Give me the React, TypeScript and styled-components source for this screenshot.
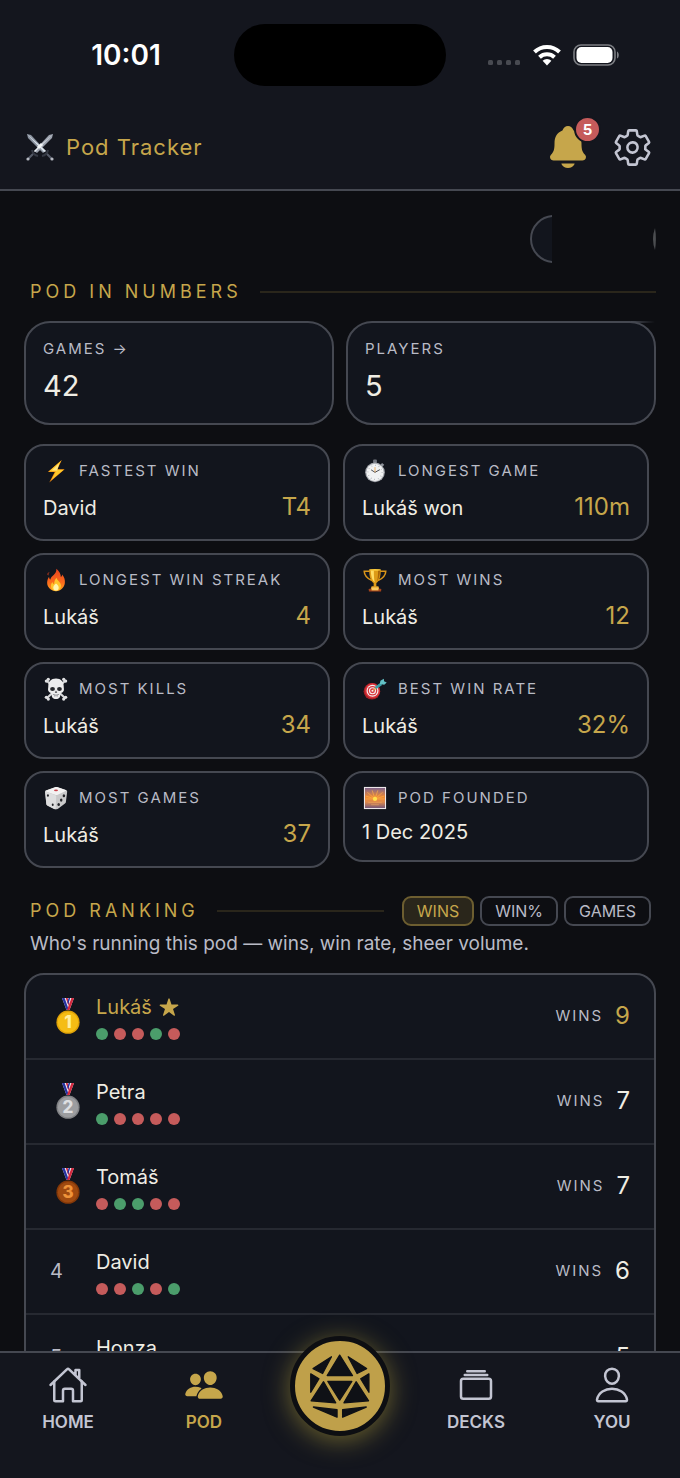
import React, { useState } from 'react';
import styled, { ThemeProvider, createGlobalStyle, css } from 'styled-components';
import {
  IoAlbumsOutline,
  IoHomeOutline,
  IoNotifications,
  IoPeople,
  IoPersonOutline,
  IoSettingsOutline,
  IoStar,
} from 'react-icons/io5';

const theme = {
  colors: {
    page: '#0d0e12',
    surface: '#12151d',
    bar: '#14161e',
    border: '#454851',
    divider: '#262931',
    text: '#efede4',
    muted: '#b9bbc6',
    icon: '#c3c5d2',
    gold: '#c6a64b',
    goldLine: 'rgba(198, 166, 75, 0.16)',
    goldFill: 'rgba(198, 166, 75, 0.16)',
    win: '#4b9d6b',
    loss: '#c55b5b',
  },
  font: "Inter, 'Liberation Sans', sans-serif",
};

type Theme = typeof theme;

declare module 'styled-components' {
  export interface DefaultTheme extends Theme {}
}

const GlobalStyle = createGlobalStyle`
  * {
    box-sizing: border-box;
  }

  body {
    margin: 0;
    background: ${({ theme }) => theme.colors.page};
    color: ${({ theme }) => theme.colors.text};
    font-family: ${({ theme }) => theme.font};
  }

  h1, h2, p, ol, dl, dd {
    margin: 0;
    padding: 0;
  }

  button {
    font-family: inherit;
    cursor: pointer;
  }

  a {
    color: inherit;
    text-decoration: none;
  }
`;

// App shell: bars stay put, the middle scrolls
const Screen = styled.div`
  display: flex;
  flex-direction: column;
  height: 100vh;
`;

const TopBar = styled.header`
  flex: none;
  background: ${({ theme }) => theme.colors.bar};
  border-bottom: 2px solid ${({ theme }) => theme.colors.border};
`;

const StatusBar = styled.div`
  display: grid;
  grid-template-columns: 1fr 212px 1fr;
  align-items: center;
  height: 110px;
`;

const Clock = styled.time`
  justify-self: center;
  padding-left: 18px;
  font-size: 28px;
  font-weight: 600;
  line-height: 32px;
  color: #fff;
`;

const Island = styled.div`
  height: 62px;
  border-radius: 31px;
  background: #000;
`;

const StatusIcons = styled.div`
  display: flex;
  align-items: center;
  justify-self: center;
  gap: 12px;
  padding-right: 20px;
`;

const TitleRow = styled.div`
  display: flex;
  align-items: center;
  justify-content: space-between;
  padding: 13px 27px 18px 26px;
`;

const Brand = styled.div`
  display: flex;
  align-items: center;
  gap: 12px;
`;

const BrandName = styled.h1`
  font-size: 22px;
  font-weight: 400;
  line-height: 28px;
  letter-spacing: 1px;
  color: ${({ theme }) => theme.colors.gold};
`;

const Actions = styled.div`
  display: flex;
  align-items: center;
  gap: 20px;
`;

const IconButton = styled.button<{ $gold?: boolean }>`
  position: relative;
  display: flex;
  padding: 0;
  border: 0;
  background: none;
  color: ${({ theme, $gold }) => ($gold ? theme.colors.gold : theme.colors.icon)};
`;

const Badge = styled.span`
  position: absolute;
  top: -7px;
  right: -9px;
  width: 27px;
  height: 27px;
  border: 2px solid ${({ theme }) => theme.colors.bar};
  border-radius: 50%;
  background: ${({ theme }) => theme.colors.loss};
  color: #fff;
  font-size: 15px;
  font-weight: 700;
  line-height: 23px;
  text-align: center;
`;

const Content = styled.main`
  flex: 1;
  min-height: 0;
  padding: 24px 24px 0;
  overflow-y: auto;
  scrollbar-width: none;
`;

// Row of chips that are only partly revealed
const ChipRow = styled.div`
  display: flex;
  align-items: center;
  justify-content: flex-end;
  gap: 100px;
  height: 48px;
`;

const ChipMask = styled.div`
  width: 22px;
  overflow: hidden;
`;

const Chip = styled.div`
  width: 48px;
  height: 48px;
  border: 2px solid ${({ theme }) => theme.colors.border};
  border-radius: 50%;
  background: ${({ theme }) => theme.colors.surface};
`;

const SectionHead = styled.div<{ $ranking?: boolean }>`
  display: flex;
  align-items: center;
  gap: 18px;
  margin-top: ${({ $ranking }) => ($ranking ? 28 : 17)}px;
  padding: ${({ $ranking }) => ($ranking ? '0 5px 0 6px' : '0 0 0 6px')};
`;

const SectionTitle = styled.h2`
  font-size: 18px;
  font-weight: 400;
  line-height: 24px;
  letter-spacing: 4px;
  color: ${({ theme }) => theme.colors.gold};
`;

const Rule = styled.span`
  flex: 1;
  height: 2px;
  background: ${({ theme }) => theme.colors.goldLine};
`;

const cardStyles = css`
  border: 2px solid ${({ theme }) => theme.colors.border};
  background: ${({ theme }) => theme.colors.surface};
`;

const Totals = styled.div`
  display: grid;
  grid-template-columns: 1fr 1fr;
  gap: 12px;
  margin-top: 17px;
`;

const TotalCard = styled.a<{ $trail?: boolean }>`
  ${cardStyles}
  position: relative;
  padding: 16px 17px 18px;
  border-radius: 26px;

  /* top edge runs on past the rounded corner and fades out */
  ${({ $trail, theme }) =>
    $trail &&
    css`
      &::after {
        content: '';
        position: absolute;
        top: -2px;
        right: -1px;
        width: 24px;
        height: 2px;
        background: linear-gradient(to right, ${theme.colors.border}, transparent);
      }
    `}
`;

const Label = styled.div`
  font-size: 15px;
  line-height: 20px;
  letter-spacing: 2px;
  text-transform: uppercase;
  color: ${({ theme }) => theme.colors.muted};
`;

const TotalValue = styled.div`
  margin-top: 8px;
  font-size: 29px;
  line-height: 38px;
`;

const StatGrid = styled.dl`
  display: grid;
  grid-template-columns: 1fr 1fr;
  align-items: start;
  gap: 12px 13px;
  margin-top: 19px;
  padding-right: 7px;
`;

const StatCard = styled.div`
  ${cardStyles}
  padding: 13px 17px 14px;
  border-radius: 20px;
`;

const StatLabel = styled.dt`
  display: flex;
  align-items: center;
  gap: 10px;
  height: 24px;
`;

const StatBody = styled.dd<{ $tall: boolean }>`
  display: flex;
  align-items: baseline;
  justify-content: space-between;
  height: ${({ $tall }) => ($tall ? 34 : 28)}px;
  margin-top: 8px;
  font-size: 20px;
  line-height: ${({ $tall }) => ($tall ? 32 : 28)}px;
`;

const StatValue = styled.span`
  font-size: 24px;
  color: ${({ theme }) => theme.colors.gold};
`;

const Filters = styled.div`
  display: flex;
  gap: 6px;
`;

const FilterButton = styled.button<{ $active: boolean }>`
  height: 30px;
  padding: 0 13px;
  border: 2px solid ${({ theme, $active }) => ($active ? '#6d5e30' : theme.colors.border)};
  border-radius: 9px;
  background: ${({ theme, $active }) => ($active ? theme.colors.goldFill : 'transparent')};
  color: ${({ theme, $active }) => ($active ? theme.colors.gold : theme.colors.muted)};
  font-size: 16px;
  line-height: 20px;
`;

const Subtitle = styled.p`
  margin: 6px 0 0 6px;
  font-size: 19px;
  line-height: 24px;
  color: ${({ theme }) => theme.colors.muted};
`;

const RankingList = styled.ol`
  ${cardStyles}
  margin-top: 17px;
  border-radius: 20px;
  list-style: none;
`;

const RankingRow = styled.li`
  display: flex;
  align-items: center;
  height: 85px;
  padding: 0 24px;
  border-bottom: 2px solid ${({ theme }) => theme.colors.divider};

  &:last-child {
    border-bottom: 0;
  }
`;

const Rank = styled.div`
  display: flex;
  width: 46px;
  padding-bottom: 2px;
  font-size: 20px;
  line-height: 24px;
  color: ${({ theme }) => theme.colors.muted};
`;

const Player = styled.div`
  flex: 1;
`;

const PlayerName = styled.div<{ $me: boolean }>`
  display: flex;
  align-items: center;
  gap: 7px;
  font-size: 20px;
  line-height: 28px;
  color: ${({ theme, $me }) => ($me ? theme.colors.gold : theme.colors.text)};
`;

const Form = styled.div`
  display: flex;
  gap: 6px;
  margin-top: 7px;
`;

const FormDot = styled.span<{ $win: boolean }>`
  width: 12px;
  height: 12px;
  border-radius: 50%;
  background: ${({ theme, $win }) => ($win ? theme.colors.win : theme.colors.loss)};
`;

const Score = styled.div<{ $me: boolean }>`
  display: flex;
  align-items: center;
  gap: 12px;
  padding-bottom: 2px;
  font-size: 24px;
  line-height: 28px;
  color: ${({ theme, $me }) => ($me ? theme.colors.gold : theme.colors.text)};
`;

const TabBar = styled.nav`
  position: relative;
  flex: none;
  display: grid;
  grid-template-columns: repeat(5, 1fr);
  height: 127px;
  border-top: 2px solid ${({ theme }) => theme.colors.border};
  background: ${({ theme }) => theme.colors.bar};
`;

const Tab = styled.a<{ $active?: boolean }>`
  display: flex;
  flex-direction: column;
  align-items: center;
  gap: 7px;
  padding-top: 12px;
  font-size: 17px;
  font-weight: 600;
  line-height: 20px;
  color: ${({ theme, $active }) => ($active ? theme.colors.gold : theme.colors.icon)};
`;

// Round button that rides over the top edge of the tab bar
const NewGameButton = styled.button`
  position: absolute;
  top: -17px;
  left: calc(50% - 50px);
  display: flex;
  width: 100px;
  height: 100px;
  padding: 0;
  border: 5px solid ${({ theme }) => theme.colors.page};
  border-radius: 50%;
  background: #bfa04a;
  box-shadow: 0 4px 26px rgba(198, 176, 60, 0.5);
`;

/* ---------- drawings ---------- */

const Svg: React.FC<{ children: React.ReactNode }> = ({ children }) => (
  <svg width="26" height="26" viewBox="-1.5 -1.5 27 27" aria-hidden="true">
    {children}
  </svg>
);

const Sliver = () => (
  <svg width="4" height="24" viewBox="0 0 4 24" aria-hidden="true">
    <path d="M3 1Q-1 12 3 23Q4.800 12 3 1z" fill="#4b4d50" />
  </svg>
);

const Swords = () => (
  <svg width="28" height="28" viewBox="0 0 28 28" aria-hidden="true">
    <path d="M2 26 8 20M26 26 20 20" stroke="#565b68" strokeWidth="2" />
    <path d="M6 17q1 5 6 6M22 17q-1 5-6 6" fill="none" stroke="#343843" strokeWidth="2" />
    <path d="M27 1 26 5 11 20 8 18 23 2z" fill="#9ba1ad" />
    <path d="M27 1 8 18 9 19z" fill="#e9eef2" />
    <path d="M1 1 5 2 20 18 17 20 2 5z" fill="#8d95a2" />
    <path d="M1 1 20 18 18 19z" fill="#dfe7ee" />
    <path d="m12 15 4-4" stroke="#f3f6f8" strokeWidth="3" />
    <circle cx="2" cy="26" r="1.6" fill="#b5b9c1" />
    <circle cx="26" cy="26" r="1.6" fill="#b5b9c1" />
  </svg>
);

const Bolt = () => (
  <Svg>
    <path d="M18 .5 3.500 13h7.200L5 24 21 10.200h-7.500z" fill="#f08a12" />
    <path d="M17.500 1 4.600 12.400h7.200L7.200 21.400 20 10.600h-7.600z" fill="#ffc928" />
    <path d="M15.400 4 7.600 11.400h5.600z" fill="#ffe680" />
  </Svg>
);

const Stopwatch = () => (
  <Svg>
    <rect x="10" y="0" width="4" height="4" rx="1" fill="#70747d" />
    <path d="m18.600 4.400 2.200 2" stroke="#8f939b" strokeWidth="2.200" />
    <circle cx="12" cy="13.400" r="10.200" fill="#a9acb2" />
    <circle cx="12" cy="13.400" r="8.900" fill="#f1f2f3" />
    <circle cx="12" cy="13.400" r="7.300" fill="none" stroke="#9a9da4" strokeWidth="1.200" strokeDasharray="0.600 3.220" />
    <path d="m8 10.800 4 2.600 5-2.800" fill="none" stroke="#44474e" strokeWidth="1" />
    <path d="M12 13.400V8" stroke="#e79a3c" strokeWidth="0.800" />
  </Svg>
);

const Fire = () => (
  <Svg>
    <defs>
      <linearGradient id="flame" x1="0" y1="0" x2="0" y2="1">
        <stop offset="0" stopColor="#e8431f" />
        <stop offset="0.600" stopColor="#fb6a1c" />
        <stop offset="1" stopColor="#ffa21d" />
      </linearGradient>
    </defs>
    <path
      d="M12.400.4c3 2.400 4.800 5.800 4.600 8.600 1-.6 1.400-1.600 1.400-2.600 2.200 2.600 3.200 5.600 2.800 8.800-.6 4.800-4.400 8.400-9.200 8.400s-9-3.600-9.200-8.400c-.1-2.900.9-5 2-6.600.1 1.400.5 2.400 1.400 3C6.600 7.600 12.800 6.600 12.400.4z"
      fill="url(#flame)"
    />
    <path d="M12.600 9.600c.4 3 4.800 4.600 4.600 8.600-.2 3-2.200 5-5.200 5s-5.200-2-5.200-5c0-2 .8-3.200 1.600-4 .2 1.400.8 2 1.600 2.200.2-2.600.6-4.800 2.600-6.800z" fill="#ffc42c" />
    <path d="M12 15.600c1.800 1.600 2.800 2.600 2.800 4.400S13.800 23 12 23s-2.800-1.200-2.800-3 1-2.800 2.800-4.400z" fill="#fff5b0" />
    <path d="M4.600 4.200c-1 1-1.200 2-.6 2.800" fill="none" stroke="#d9401e" strokeWidth="1" />
  </Svg>
);

const Trophy = () => (
  <Svg>
    <path
      d="M6.500 3H.8c.2 5 3 7.500 8 9.500M17.500 3h5.700c-.2 5-3 7.500-8 9.500"
      fill="none"
      stroke="#d9951a"
      strokeWidth="1.600"
    />
    <path d="M6 1h12c0 7.500-1.400 12-4.600 14v4h-2.800v-4C7.400 13 6 8.500 6 1z" fill="#dd9b17" />
    <path d="M7.600 2h3.200c0 6 .2 9.500 1 12.500C9 12.500 7.800 8 7.600 2z" fill="#ffdc63" />
    <path d="M15.200 2h2c-.2 5-1 9-3 11.200.8-3.600 1-7 1-11.200z" fill="#a86508" />
    <ellipse cx="12" cy="1.500" rx="6" ry="1" fill="#f9c93d" />
    <path d="M8.500 18.500h7l1 3h-9z" fill="#e8a52a" />
    <rect x="5.600" y="21" width="12.800" height="3" rx="0.600" fill="#a3431a" />
    <rect x="8.400" y="19.800" width="7.200" height="3" fill="#f6c95f" />
  </Svg>
);

const Skull = () => (
  <Svg>
    <g stroke="#d6d7d9" strokeWidth="2.200" strokeLinecap="round">
      <path d="m3 4 18 17M21 4 3 21" />
    </g>
    <g fill="#dfe0e2">
      <circle cx="2" cy="3.800" r="1.700" />
      <circle cx="4" cy="2" r="1.700" />
      <circle cx="22" cy="3.800" r="1.700" />
      <circle cx="20" cy="2" r="1.700" />
      <circle cx="2" cy="20.600" r="1.700" />
      <circle cx="4" cy="22.400" r="1.700" />
      <circle cx="22" cy="20.600" r="1.700" />
      <circle cx="20" cy="22.400" r="1.700" />
    </g>
    <path
      d="M12 1.200c5.200 0 8 3.400 8 8 0 1.600.4 2.800.2 4.200-.3 1.600-2 2.600-3.400 3-.2 3-.6 6-4.800 6s-4.600-3-4.800-6c-1.400-.4-3.100-1.400-3.400-3-.2-1.400.2-2.600.2-4.200 0-4.600 2.800-8 8-8z"
      fill="#ececed"
    />
    <ellipse cx="8.400" cy="12" rx="2.500" ry="2" fill="#26272b" />
    <ellipse cx="15.600" cy="12" rx="2.500" ry="2" fill="#26272b" />
    <path d="m12 13.600 1.300 2.400h-2.600z" fill="#3a3b40" />
    <path d="M8.800 17.600q3.200 1.600 6.400 0M10.800 18v2M13.200 18v2" fill="none" stroke="#8d8f94" strokeWidth="0.900" />
  </Svg>
);

const Dart = () => (
  <Svg>
    <circle cx="8.800" cy="14.400" r="8.600" fill="#a81f25" />
    <circle cx="9.400" cy="13.800" r="7.800" fill="#d8333a" />
    <circle cx="9.400" cy="13.800" r="6.200" fill="#f5f1f1" />
    <circle cx="9.400" cy="13.800" r="5" fill="#d8333a" />
    <circle cx="9.400" cy="13.800" r="3.700" fill="#f5f1f1" />
    <circle cx="9.400" cy="13.800" r="2.500" fill="#d8333a" />
    <circle cx="9.400" cy="13.800" r="1.100" fill="#f5f1f1" />
    <path d="m10 13.400 4-3" stroke="#d8a54b" strokeWidth="1.300" />
    <path d="m12.600 10.800 6-4.200" stroke="#3aa0a8" strokeWidth="2.800" />
    <path d="m17 6.800.6-3.400 3.600-2 .2 2.600 2.800 1.200-2.600 2.400z" fill="#63c1c6" />
  </Svg>
);

const Dice = () => (
  <Svg>
    <path d="M11 .8c1-.3 1.800-.3 2.800 0l8.400 2.800c1 .3 1.500 1 1.400 2l-1.300 10.400c-.1 1-.5 1.500-1.300 2.100l-6.900 5c-1.300.8-2.800.8-4.200.2l-6.600-3.200c-.9-.5-1.300-1-1.400-2L.6 6c-.1-1 .3-1.700 1.300-2z" fill="#c9c9ca" />
    <path d="M11 .8c1-.3 1.800-.3 2.800 0l8.200 2.800c.8.300.8.800 0 1.200l-8.200 3.800c-1 .4-1.600.4-2.600.1L2 5.400c-1-.4-1-1 0-1.300z" fill="#f3f2f2" />
    <path d="M.8 6c0-.5.5-.6 1-.4l9.200 3.400c.8.300 1.200.8 1.200 1.600l-.5 13c-.6 0-1.200-.2-1.800-.5l-6.800-3.400c-.7-.4-1-1-1.100-1.800z" fill="#dededf" />
    <ellipse cx="12" cy="4" rx="2.100" ry="0.900" fill="#c7424b" />
    <g fill="#25262a">
      <ellipse cx="3.600" cy="9.400" rx="1" ry="1.400" />
      <ellipse cx="8.600" cy="19" rx="1" ry="1.400" />
      <ellipse cx="20.200" cy="9.600" rx="1.300" ry="1.600" />
      <ellipse cx="17.400" cy="14.200" rx="1.300" ry="1.600" />
      <ellipse cx="14.800" cy="18.800" rx="1.300" ry="1.600" />
    </g>
  </Svg>
);

const Sunrise = () => (
  <Svg>
    <defs>
      <linearGradient id="sky" x1="0" y1="0" x2="0" y2="1">
        <stop offset="0" stopColor="#80658c" />
        <stop offset="0.450" stopColor="#f08a35" />
        <stop offset="0.700" stopColor="#e08a4c" />
        <stop offset="1" stopColor="#75587a" />
      </linearGradient>
    </defs>
    <rect x="0.500" y="0.500" width="23" height="23" fill="#efe9ec" />
    <rect x="1.600" y="1.600" width="20.800" height="20.800" fill="url(#sky)" />
    <path
      d="M12 13 4 6M12 13 9 4M12 13l3-9M12 13l8-7M12 13 2.500 10M12 13l9.500-3M12 13H2M12 13h10"
      stroke="#ffb445"
      strokeWidth="0.800"
      strokeOpacity="0.800"
    />
    <path d="M5 16.500h14M8 19h8" stroke="#f0a860" strokeWidth="1" strokeOpacity="0.600" />
    <circle cx="12" cy="13" r="2.200" fill="#ffe14d" />
  </Svg>
);

const medals = [
  { rim: '#dfa208', face: '#f5bd14', digit: '#fff0a0' },
  { rim: '#818285', face: '#9c9da0', digit: '#dedfe1' },
  { rim: '#843808', face: '#a04a10', digit: '#f0943a' },
];

const Medal: React.FC<{ place: number }> = ({ place }) => {
  const { rim, face, digit } = medals[place - 1];
  return (
    <svg width="36" height="36" viewBox="0 0 36 36" role="img" aria-label={`Place ${place}`}>
      <path d="M12 0h12l-4.500 12h-3z" fill="#f1f0f5" />
      <path d="M12 0h2.600l3.600 10-.7 2h-1z" fill="#2733a0" />
      <path d="M15.800 0h1.800l1.600 5-.8 2.500z" fill="#d3283e" />
      <path d="M24 0h-2.600L17 12h2.500z" fill="#d3283e" />
      <path d="M20.200 0h-1.600l-1.200 4 .8 2.400z" fill="#2733a0" />
      <circle cx="18" cy="24.200" r="11.600" fill={rim} />
      <circle cx="18" cy="24.200" r="10.200" fill={face} />
      <text x="18" y="30" textAnchor="middle" fontFamily="Inter, sans-serif" fontSize="17" fontWeight="800" fill={digit}>
        {place}
      </text>
    </svg>
  );
};

const D20 = () => (
  <svg width="90" height="90" viewBox="73 91 274 274" aria-hidden="true">
    <g fill="#0f1116" stroke="#0f1116" strokeWidth="4" strokeLinejoin="round">
      <path d="M209 134 171 196H248zM184 139 128 175 157 190zM235 139 291 175 262 190z" />
      <path d="M121 191V247L146 206zM298 191V247L273 206zM173 214H246L209 271z" />
      <path d="M160 215 122 273 197 279zM259 215 297 273 222 279z" />
      <path d="M129 292 201 300V323zM290 292 218 300V323z" />
    </g>
  </svg>
);

const Wifi = () => (
  <svg width="28" height="22" viewBox="0 0 28 22" aria-hidden="true">
    <g fill="none" stroke="#fff" strokeWidth="4">
      <path d="M1.500 8a18 18 0 0 1 25 0" />
      <path d="M6.500 13.200a11 11 0 0 1 15 0" />
    </g>
    <path d="M9.600 16.800a6.400 6.400 0 0 1 8.800 0L14 21.600z" fill="#fff" />
  </svg>
);

const Battery = () => (
  <svg width="46" height="22" viewBox="0 0 46 22" aria-hidden="true">
    <rect x="1" y="1" width="41" height="20" rx="7" fill="none" stroke="#7c7e83" strokeWidth="1.600" />
    <rect x="3.500" y="3" width="36" height="16" rx="5" fill="#fff" />
    <path d="M44 7.500c2.400 1 2.400 6 0 7z" fill="#7c7e83" />
  </svg>
);

const Cellular = () => (
  <svg width="34" height="22" viewBox="0 0 34 22" aria-hidden="true">
    {[0, 9, 18, 27].map((x) => (
      <rect key={x} x={x + 1} y="16" width="5" height="5" rx="1.500" fill="#484a51" />
    ))}
  </svg>
);

/* ---------- data ---------- */

interface Stat {
  icon: React.ReactNode;
  label: string;
  who: string;
  value?: string;
}

const stats: Stat[] = [
  { icon: <Bolt />, label: 'Fastest win', who: 'David', value: 'T4' },
  { icon: <Stopwatch />, label: 'Longest game', who: 'Lukáš won', value: '110m' },
  { icon: <Fire />, label: 'Longest win streak', who: 'Lukáš', value: '4' },
  { icon: <Trophy />, label: 'Most wins', who: 'Lukáš', value: '12' },
  { icon: <Skull />, label: 'Most kills', who: 'Lukáš', value: '34' },
  { icon: <Dart />, label: 'Best win rate', who: 'Lukáš', value: '32%' },
  { icon: <Dice />, label: 'Most games', who: 'Lukáš', value: '37' },
  { icon: <Sunrise />, label: 'Pod founded', who: '1 Dec 2025' },
];

const players = [
  { name: 'Lukáš', form: 'WLLWL', wins: 9, me: true },
  { name: 'Petra', form: 'WLLLL', wins: 7, me: false },
  { name: 'Tomáš', form: 'LWWLL', wins: 7, me: false },
  { name: 'David', form: 'LLWLW', wins: 6, me: false },
  { name: 'Honza', form: 'LWLLL', wins: 5, me: false },
];

const filters = ['WINS', 'WIN%', 'GAMES'];

const App: React.FC = () => {
  const [filter, setFilter] = useState('WINS');

  return (
    <ThemeProvider theme={theme}>
      <GlobalStyle />
      <Screen>
        <TopBar>
          <StatusBar>
            <Clock>10:01</Clock>
            <Island />
            <StatusIcons>
              <Cellular />
              <Wifi />
              <Battery />
            </StatusIcons>
          </StatusBar>
          <TitleRow>
            <Brand>
              <Swords />
              <BrandName>Pod Tracker</BrandName>
            </Brand>
            <Actions>
              <IconButton $gold aria-label="Notifications">
                <IoNotifications size={48} />
                <Badge>5</Badge>
              </IconButton>
              <IconButton aria-label="Settings">
                <IoSettingsOutline size={41} />
              </IconButton>
            </Actions>
          </TitleRow>
        </TopBar>

        <Content>
          <ChipRow>
            <ChipMask>
              <Chip />
            </ChipMask>
            <Sliver />
          </ChipRow>

          <SectionHead>
            <SectionTitle>POD IN NUMBERS</SectionTitle>
            <Rule />
          </SectionHead>

          <Totals>
            <TotalCard href="#games">
              <Label>Games →</Label>
              <TotalValue>42</TotalValue>
            </TotalCard>
            <TotalCard as="div" $trail>
              <Label>Players</Label>
              <TotalValue>5</TotalValue>
            </TotalCard>
          </Totals>

          <StatGrid>
            {stats.map(({ icon, label, who, value }) => (
              <StatCard key={label}>
                <StatLabel>
                  {icon}
                  <Label as="span">{label}</Label>
                </StatLabel>
                <StatBody $tall={Boolean(value)}>
                  <span>{who}</span>
                  {value && <StatValue>{value}</StatValue>}
                </StatBody>
              </StatCard>
            ))}
          </StatGrid>

          <SectionHead $ranking>
            <SectionTitle>POD RANKING</SectionTitle>
            <Rule />
            <Filters>
              {filters.map((name) => (
                <FilterButton
                  key={name}
                  $active={name === filter}
                  aria-pressed={name === filter}
                  onClick={() => setFilter(name)}
                >
                  {name}
                </FilterButton>
              ))}
            </Filters>
          </SectionHead>
          <Subtitle>Who's running this pod — wins, win rate, sheer volume.</Subtitle>

          <RankingList>
            {players.map(({ name, form, wins, me }, index) => (
              <RankingRow key={name}>
                <Rank>{index < 3 ? <Medal place={index + 1} /> : index + 1}</Rank>
                <Player>
                  <PlayerName $me={me}>
                    {name}
                    {me && <IoStar size={20} />}
                  </PlayerName>
                  <Form>
                    {form.split('').map((result, i) => (
                      <FormDot key={i} $win={result === 'W'} />
                    ))}
                  </Form>
                </Player>
                <Score $me={me}>
                  <Label as="span">Wins</Label>
                  {wins}
                </Score>
              </RankingRow>
            ))}
          </RankingList>
        </Content>

        <TabBar>
          <Tab href="#home">
            <IoHomeOutline size={40} />
            HOME
          </Tab>
          <Tab href="#pod" $active>
            <IoPeople size={40} />
            POD
          </Tab>
          <span />
          <Tab href="#decks">
            <IoAlbumsOutline size={40} />
            DECKS
          </Tab>
          <Tab href="#you">
            <IoPersonOutline size={40} />
            YOU
          </Tab>
          <NewGameButton aria-label="New game">
            <D20 />
          </NewGameButton>
        </TabBar>
      </Screen>
    </ThemeProvider>
  );
};

export default App;
